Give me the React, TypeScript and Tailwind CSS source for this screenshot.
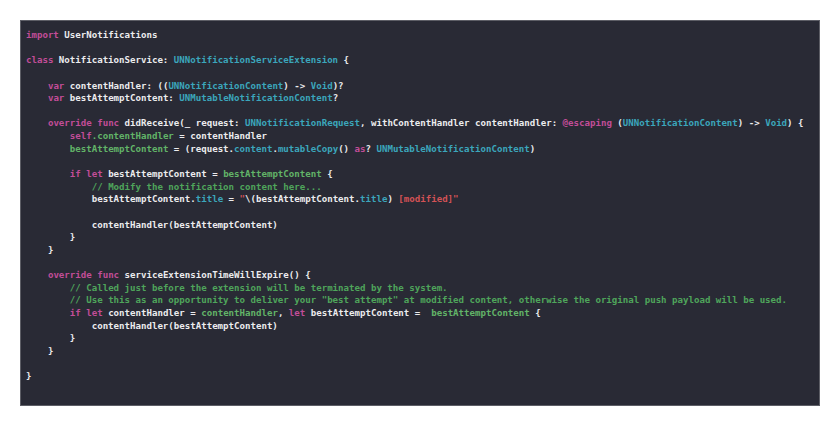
type Seg = [string, string?];

// colour keys
const K = 'text-[#c24d98]'; // keyword
const T = 'text-[#3ba6bc]'; // type / member
const P = 'text-[#62b468]'; // project symbol
const C = 'text-[#4fa55b]'; // comment
const S = 'text-[#d45255]'; // string

const LINES: Seg[][] = [
  [['import', K], [' UserNotifications']],
  [],
  [['class', K], [' NotificationService: '], ['UNNotificationServiceExtension', T], [' {']],
  [],
  [['    '], ['var', K], [' contentHandler: (('], ['UNNotificationContent', T], [') -> '], ['Void', T], [')?']],
  [['    '], ['var', K], [' bestAttemptContent: '], ['UNMutableNotificationContent', T], ['?']],
  [],
  [
    ['    '], ['override func', K], [' didReceive(_ request: '], ['UNNotificationRequest', T],
    [', withContentHandler contentHandler: '], ['@escaping', K], [' ('], ['UNNotificationContent', T],
    [') -> '], ['Void', T], [') {'],
  ],
  [['        '], ['self', K], ['.contentHandler', P], [' = contentHandler']],
  [
    ['        '], ['bestAttemptContent', P], [' = (request.'], ['content', T], ['.'], ['mutableCopy', T],
    ['() '], ['as', K], ['? '], ['UNMutableNotificationContent', T], [')'],
  ],
  [],
  [['        '], ['if let', K], [' bestAttemptContent = '], ['bestAttemptContent', P], [' {']],
  [['            '], ['// Modify the notification content here...', C]],
  [
    ['            bestAttemptContent.'], ['title', T], [' = '], ['"', S], ['\\(bestAttemptContent.'],
    ['title', T], [')'], [' [modified]"', S],
  ],
  [],
  [['            contentHandler(bestAttemptContent)']],
  [['        }']],
  [['    }']],
  [],
  [['    '], ['override func', K], [' serviceExtensionTimeWillExpire() {']],
  [['        '], ['// Called just before the extension will be terminated by the system.', C]],
  [
    ['        '],
    ['// Use this as an opportunity to deliver your "best attempt" at modified content, otherwise the original push payload will be used.', C],
  ],
  [
    ['        '], ['if let', K], [' contentHandler = '], ['contentHandler', P], [', '], ['let', K],
    [' bestAttemptContent =  '], ['bestAttemptContent', P], [' {'],
  ],
  [['            contentHandler(bestAttemptContent)']],
  [['        }']],
  [['    }']],
  [],
  [['}']],
];

export default function App() {
  return (
    <div className="w-[840px] h-[422px] bg-white p-[20px]">
      <div className="w-[800px] h-[386px] bg-[#292a35] border border-[#5d5e66] pl-[5px] pt-[8px] overflow-hidden">
        <pre
          className="text-[9.1px] leading-[12.65px] text-[#ececee] font-bold whitespace-pre"
          style={{ fontFamily: '"DejaVu Sans Mono", monospace' }}
        >
          {LINES.map((line, i) => (
            <div key={i} className="h-[12.65px]">
              {line.map(([text, cls], j) => (
                <span key={j} className={cls}>
                  {text}
                </span>
              ))}
            </div>
          ))}
        </pre>
      </div>
    </div>
  );
}
